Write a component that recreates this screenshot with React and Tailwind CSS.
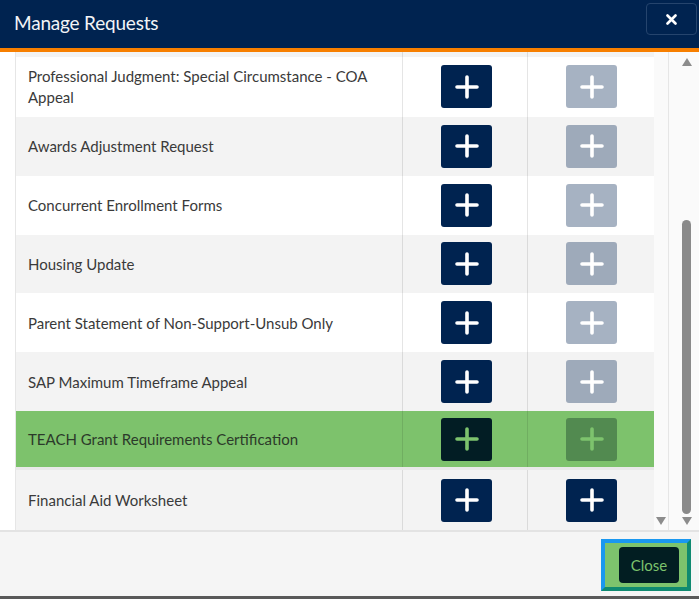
import React from "react";

const rows = [
  { label: "Professional Judgment: Special Circumstance - COA Appeal", bg: "bg-white", h: "h-[60px]" },
  { label: "Awards Adjustment Request", bg: "bg-[#f3f3f3]", h: "h-[59px]" },
  { label: "Concurrent Enrollment Forms", bg: "bg-white", h: "h-[59px]" },
  { label: "Housing Update", bg: "bg-[#f3f3f3]", h: "h-[59px]" },
  { label: "Parent Statement of Non-Support-Unsub Only", bg: "bg-white", h: "h-[59px]" },
  { label: "SAP Maximum Timeframe Appeal", bg: "bg-[#f3f3f3]", h: "h-[59px]" },
];

function PlusIcon({ color = "#ffffff" }) {
  return (
    <svg width="24" height="24" viewBox="0 0 24 24" fill="none">
      <path d="M12 2v20M2 12h20" stroke={color} strokeWidth="3.6" strokeLinecap="round" />
    </svg>
  );
}

function AddButton({ variant }) {
  const cls =
    variant === "active"
      ? "bg-[#002350]"
      : variant === "disabled"
      ? "bg-[#002350]/35"
      : variant === "greenActive"
      ? "bg-[#021d24]"
      : "bg-[#528a50]";
  const color = variant === "greenActive" || variant === "greenDisabled" ? "#7dc36d" : "#ffffff";
  return (
    <div className={`w-[51px] h-[43px] rounded-[3px] flex items-center justify-center ${cls}`}>
      <PlusIcon color={color} />
    </div>
  );
}

function Row({ label, bg, h, left, right, text = "text-[#3a3a3a]" }) {
  return (
    <div className={`grid grid-cols-[386px_125px_1fr] ${bg} ${h}`}>
      <div className={`flex items-center pl-[12px] pr-[20px] pt-[1px] text-[15px] leading-[21px] ${text}`}>{label}</div>
      <div className="border-l border-black/10 flex items-center justify-center pl-[3px]">
        <AddButton variant={left} />
      </div>
      <div className="border-l border-black/10 flex items-center justify-center pl-[1px]">
        <AddButton variant={right} />
      </div>
    </div>
  );
}

function Tri({ up }) {
  return (
    <svg width="10" height="8" viewBox="0 0 10 8">
      {up ? <path d="M5 0L10 8H0Z" fill="#8c8c8c" /> : <path d="M0 0H10L5 8Z" fill="#8c8c8c" />}
    </svg>
  );
}

export default function App() {
  return (
    <div className="w-[699px] h-[599px] bg-[#5a5a5a] flex flex-col overflow-hidden font-['Lato','Noto_Sans',sans-serif]">
      {/* Header */}
      <div className="h-[48px] bg-[#002350] flex items-center justify-between pl-[14px] pr-[2px]">
        <div className="text-[#f2f4f7] text-[19px] font-normal tracking-[-0.2px] pb-[2px]">Manage Requests</div>
        <div className="w-[51px] h-[32px] mb-[10px] border border-[#25446d] rounded-[4px] flex items-center justify-center">
          <svg width="11" height="11" viewBox="0 0 11 11">
            <path d="M1.5 1.5l8 8M9.5 1.5l-8 8" stroke="#ffffff" strokeWidth="2.6" strokeLinecap="round" />
          </svg>
        </div>
      </div>
      <div className="h-[4px] bg-[#f77f00]" />

      {/* Body */}
      <div className="h-[478px] flex bg-white">
        <div className="w-[15px] bg-white" />
        <div className="w-[639px] border-l border-[#e6e6e6] flex flex-col">
          <div className="grid grid-cols-[386px_125px_1fr] h-[5px] bg-[#f3f3f3]">
            <div />
            <div className="border-l border-black/10" />
            <div className="border-l border-black/10" />
          </div>
          {rows.map((r) => (
            <Row key={r.label} label={r.label} bg={r.bg} h={r.h} left="active" right="disabled" />
          ))}
          <div className="border-b-[3px] border-[#e9e9e9]">
            <Row
              label="TEACH Grant Requirements Certification"
              bg="bg-[#7dc26c]"
              h="h-[56px]"
              left="greenActive"
              right="greenDisabled"
              text="text-[#2c3a2a]"
            />
          </div>
          <Row label="Financial Aid Worksheet" bg="bg-[#f3f3f3]" h="h-[60px]" left="active" right="active" />
        </div>
        <div className="w-[14px] bg-[#fafafa] flex flex-col justify-end items-center pb-[5px]">
          <Tri />
        </div>
        <div className="w-[31px] border-l border-[#e6e6e6] bg-[#fafafa] flex flex-col items-center pt-[6px] pb-[5px] pl-[5px]">
          <Tri up />
          <div className="flex-1 w-full flex flex-col items-center pt-[154px] pb-[3px]">
            <div className="w-[9px] flex-1 rounded-full bg-[#8a8a8a]" />
          </div>
          <Tri />
        </div>
      </div>

      {/* Footer */}
      <div className="h-[66px] bg-[#f5f5f5] border-t-2 border-[#e3e3e3] flex justify-end items-start pr-[8px] pt-[7px]">
        <div className="border-[4px] border-t-[#1a98f0] border-l-[#1a98f0] border-r-[#0f8a70] border-b-[#0f8a70] bg-[#7dc36d] pl-[14px] pr-[8px] py-[4px]">
          <div className="w-[60px] h-[36px] rounded-[4px] bg-[#021e22] flex items-center justify-center text-[#7dc36d] text-[15px]">
            Close
          </div>
        </div>
      </div>
      <div className="flex-1 bg-[#595959]" />
    </div>
  );
}
